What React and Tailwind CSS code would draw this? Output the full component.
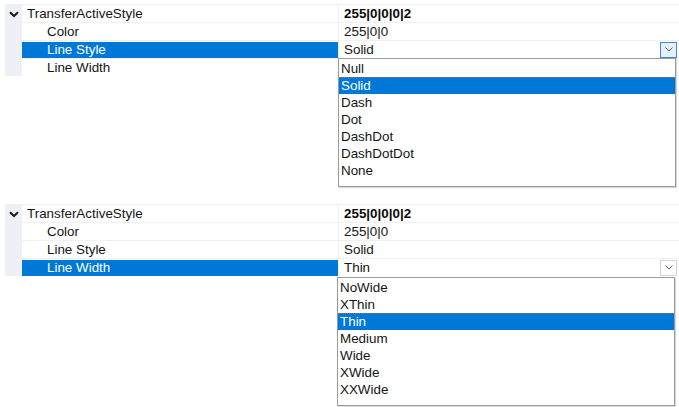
import React from "react";

const font = { fontFamily: '"Liberation Sans", Arial, sans-serif' };

const Chevron = ({ className }) => (
  <svg width="10" height="7" viewBox="0 0 10 7" className={className}>
    <path d="M1 1.2 L5 5 L9 1.2" fill="none" stroke="currentColor" strokeWidth="2" />
  </svg>
);

const PropertySection = ({ selected, rows, items, highlighted, focused, listTop, listLeft, className }) => {
  return (
    <div className={`relative ${className}`}>
      <div className="flex pl-[5px]">
        <div className="w-[17px] bg-[#eef0f6] flex justify-center pt-[7px]">
          <Chevron className="text-[#1a1a1a]" />
        </div>
        <div className="flex-1">
          {rows.map((row, i) => (
            <div key={row.name} className="h-[18px] flex border-t border-[#eef0f4]">
              <div className="w-[316px] flex items-center">
                <div
                  className={`w-full h-[16px] flex items-center ${i === 0 ? "pl-[5px]" : "pl-[25px]"} ${
                    selected === i ? "bg-[#0078d7] text-white" : "text-[#141414]"
                  }`}
                >
                  {row.name}
                </div>
              </div>
              <div className="flex-1 flex items-center justify-between pl-[5px] pr-[2px] border-l border-[#eef0f4]">
                <span className={i === 0 ? "font-bold text-[#0a0a0a]" : "text-[#141414]"}>{row.value}</span>
                {selected === i && (
                  <div
                    className={`w-[17px] h-[16px] flex items-center justify-center border ${
                      focused ? "border-[#3d88d6] bg-[#e6f0fa]" : "border-[#d4d4d4] bg-white"
                    }`}
                  >
                    <svg width="8" height="5" viewBox="0 0 8 5">
                      <path d="M0.5 0.5 L4 4 L7.5 0.5" fill="none" stroke="#606060" strokeWidth="1" />
                    </svg>
                  </div>
                )}
              </div>
            </div>
          ))}
        </div>
      </div>
      <div
        className={`absolute ${listTop} ${listLeft} w-[338px] h-[129px] bg-white border border-[#9a9a9a] shadow-[1px_1px_1px_rgba(0,0,0,0.15)] pt-[1px]`}
      >
        {items.map((item) => (
          <div
            key={item}
            className={`h-[17px] flex items-center pl-[2px] ${
              item === highlighted ? "bg-[#0078d7] text-white border-t border-dotted border-[#a07040]" : "text-[#141414]"
            }`}
          >
            {item}
          </div>
        ))}
      </div>
    </div>
  );
};

const App = () => {
  const rows = (width, style) => [
    { name: "TransferActiveStyle", value: "255|0|0|0|2" },
    { name: "Color", value: "255|0|0" },
    { name: "Line Style", value: style },
    { name: "Line Width", value: width },
  ];

  return (
    <div className="w-[679px] h-[407px] bg-white overflow-hidden text-[13.4px] leading-none" style={font}>
      <PropertySection
        className="h-[199px] pt-[4px]"
        selected={2}
        focused
        rows={rows("", "Solid")}
        items={["Null", "Solid", "Dash", "Dot", "DashDot", "DashDotDot", "None"]}
        highlighted="Solid"
        listTop="top-[58px]"
        listLeft="left-[338px]"
      />
      <PropertySection
        className="h-[208px] pt-[5px]"
        selected={3}
        rows={rows("Thin", "Solid")}
        items={["NoWide", "XThin", "Thin", "Medium", "Wide", "XWide", "XXWide"]}
        highlighted="Thin"
        listTop="top-[78px]"
        listLeft="left-[337px]"
      />
    </div>
  );
};

export default App;
